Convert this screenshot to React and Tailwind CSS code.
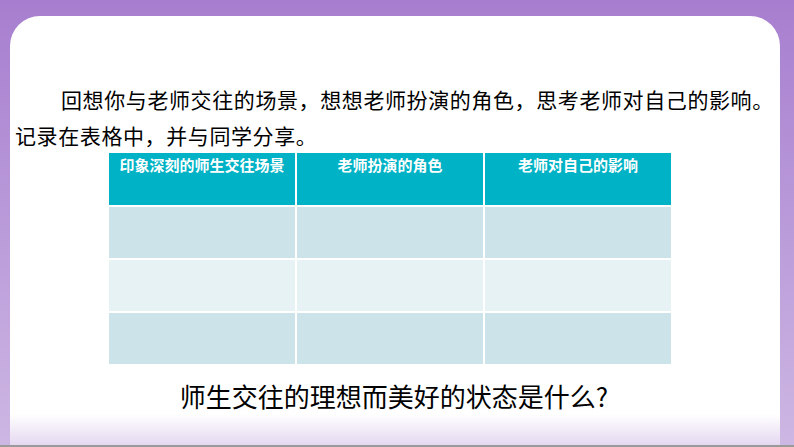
export default function App() {
  const rows = ['bg-[#cce4e9]', 'bg-[#e6f2f4]', 'bg-[#cce4e9]']
  return (
    <div className="w-[794px] h-[447px] overflow-hidden bg-gradient-to-b from-[#a77ecf] to-[#cdb7e3] flex flex-col" style={{ fontFamily: '"Noto Sans CJK SC", sans-serif' }}>
      <div className="mt-[16px] mx-[10px] mr-[14px] flex-1 bg-white rounded-t-[30px] flex flex-col">
        <p className="mt-[65px] pl-[5px] text-[21px] leading-[36px] text-black tracking-[0.6px] whitespace-nowrap">
          <span className="pl-[46px]">回想你与老师交往的场景，想想老师扮演的角色，思考老师对自己的影响。</span>
          <br />记录在表格中，并与同学分享。
        </p>
        <div className="ml-[99px] mt-[0px] w-[562px] grid grid-cols-3 gap-[2px]">
          {['印象深刻的师生交往场景', '老师扮演的角色', '老师对自己的影响'].map((t) => (
            <div key={t} className="h-[52px] bg-[#00b2c5] text-white text-[15px] font-bold text-center pt-[1px]">{t}</div>
          ))}
          {rows.flatMap((c, i) => [0, 1, 2].map((j) => (
            <div key={i + '-' + j} className={`h-[51px] ${c}`} />
          )))}
        </div>
        <div className="mt-[14px] text-center text-[26px] leading-[36px] text-black pr-[2px]">师生交往的理想而美好的状态是什么?</div>
        <div className="flex-1 bg-gradient-to-b from-white to-[#e5d8f0]" />
      </div>
      <div className="h-[2px] bg-[#9a9a9a]" />
    </div>
  )
}
